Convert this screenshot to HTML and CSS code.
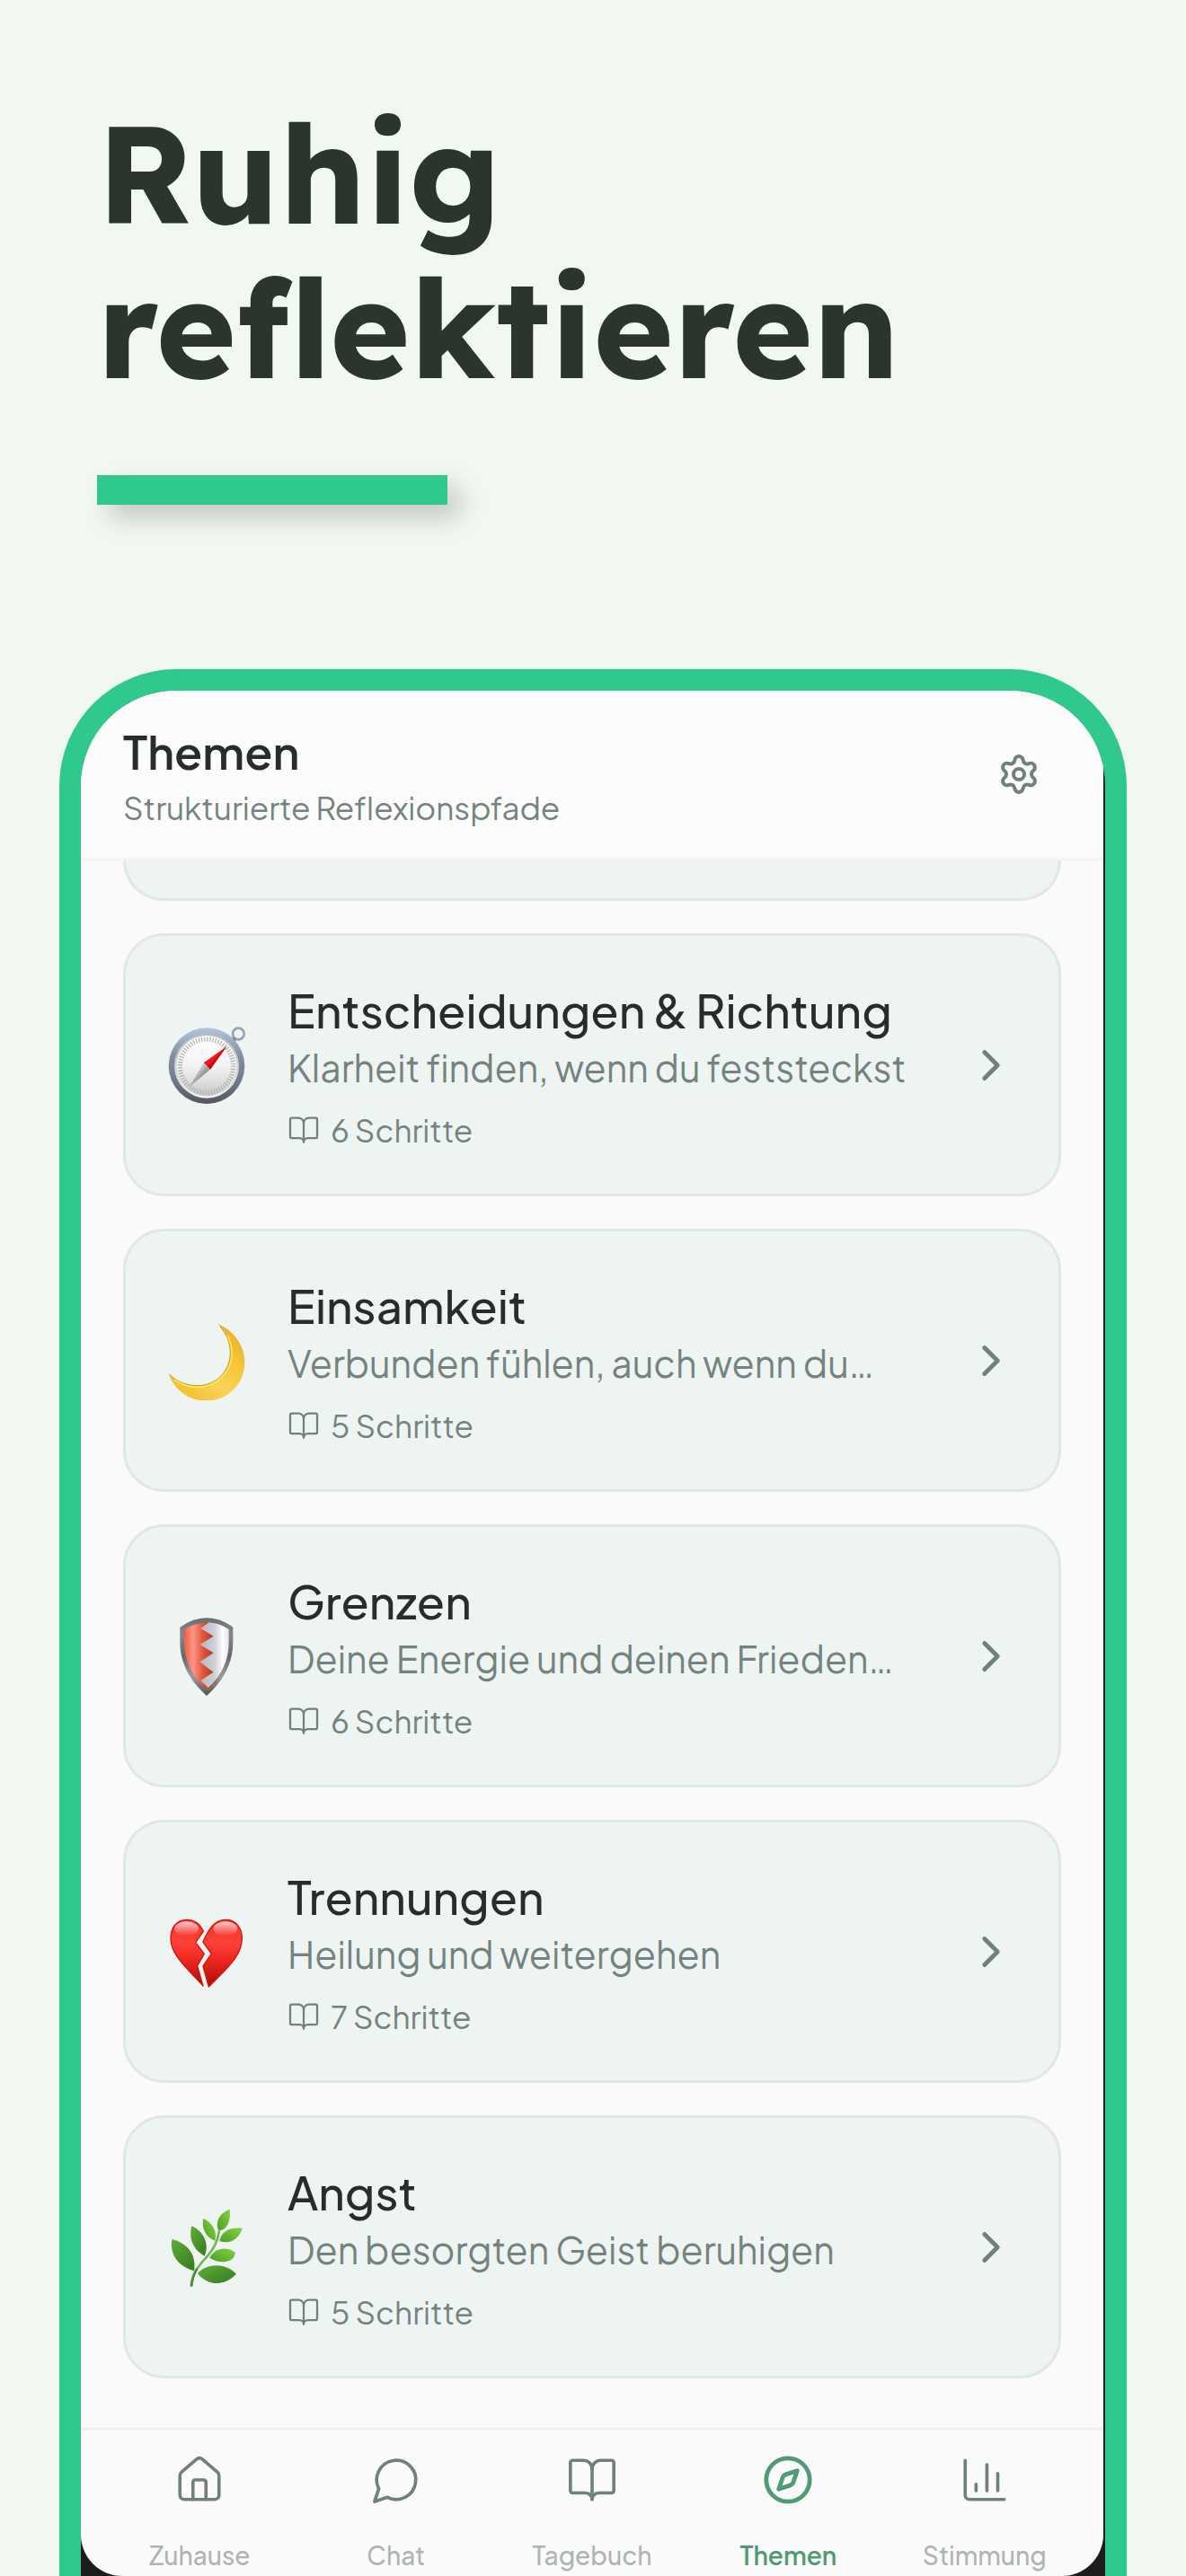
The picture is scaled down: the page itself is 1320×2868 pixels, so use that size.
FILE: index.html
```html
<!DOCTYPE html>
<html lang="de">
<head>
<meta charset="utf-8">
<meta name="viewport" content="width=device-width, initial-scale=1">
<title>Ruhig reflektieren</title>
<link rel="stylesheet" href="styles.css">
</head>
<body>
<svg width="0" height="0" class="defs" aria-hidden="true">
  <defs>
    <symbol id="book" viewBox="0 0 24 24"><path d="M12 7v14"/><path d="M3 18a1 1 0 0 1-1-1V4a1 1 0 0 1 1-1h5a4 4 0 0 1 4 4 4 4 0 0 1 4-4h5a1 1 0 0 1 1 1v13a1 1 0 0 1-1 1h-6a3 3 0 0 0-3 3 3 3 0 0 0-3-3z"/></symbol>
    <symbol id="chevron" viewBox="0 0 24 24"><path d="m9 18 6-6-6-6"/></symbol>
  </defs>
</svg>

<header class="hero">
  <h1 class="hero-title">Ruhig<br>reflektieren</h1>
  <div class="hero-bar"></div>
</header>

<main class="phone">
  <div class="screen">
    <header class="topbar">
      <div>
        <h2 class="topbar-title">Themen</h2>
        <p class="topbar-sub">Strukturierte Reflexionspfade</p>
      </div>
      <button class="settings" type="button" aria-label="Einstellungen">
        <svg class="icon icon-gear" viewBox="0 0 24 24"><path d="M9.671 4.136a2.34 2.34 0 0 1 4.659 0 2.34 2.34 0 0 0 3.319 1.915 2.34 2.34 0 0 1 2.33 4.033 2.34 2.34 0 0 0 0 3.831 2.34 2.34 0 0 1-2.33 4.033 2.34 2.34 0 0 0-3.319 1.915 2.34 2.34 0 0 1-4.659 0 2.34 2.34 0 0 0-3.32-1.915 2.34 2.34 0 0 1-2.33-4.033 2.34 2.34 0 0 0 0-3.831A2.34 2.34 0 0 1 6.35 6.051a2.34 2.34 0 0 0 3.319-1.915"/><circle cx="12" cy="12" r="3"/></svg>
      </button>
    </header>

    <div class="list">
      <div class="card-tail"></div>

      <a class="card" href="#entscheidungen">
        <svg class="emoji" viewBox="48 61 264 264">
          <defs>
            <linearGradient id="bezel" x1="0" y1="0" x2="0" y2="1"><stop offset="0" stop-color="#b3c6dc"/><stop offset=".35" stop-color="#8592a4"/><stop offset=".7" stop-color="#70798a"/><stop offset="1" stop-color="#55545c"/></linearGradient>
            <linearGradient id="rim" x1="0" y1="0" x2="0" y2="1"><stop offset="0" stop-color="#b9bbbd"/><stop offset=".6" stop-color="#d4d5d6"/><stop offset="1" stop-color="#f4f4f4"/></linearGradient>
            <linearGradient id="face" x1="0" y1="0" x2="0" y2="1"><stop offset="0" stop-color="#ffffff"/><stop offset=".5" stop-color="#f3f3f3"/><stop offset="1" stop-color="#c9c9c9"/></linearGradient>
            <linearGradient id="silver" x1="0" y1="0" x2="1" y2="1"><stop offset=".3" stop-color="#e2e2e2"/><stop offset=".55" stop-color="#9a9a9a"/></linearGradient>
          </defs>
          <circle cx="286" cy="88" r="19" fill="none" stroke="#9aa3b4" stroke-width="8"/>
          <path d="M260 104l12-4 6 10-6 12z" fill="#6f7b8b"/>
          <circle cx="180" cy="195" r="127" fill="url(#bezel)"/>
          <circle cx="180" cy="195" r="108" fill="url(#rim)"/>
          <circle cx="180" cy="195" r="101" fill="url(#face)"/>
          <circle cx="180" cy="195" r="89" fill="none" stroke="#b4b4b4" stroke-width="16" stroke-dasharray="4 5.32"/>
          <path d="M247 130L170 185l12 12 10 10z" fill="#f3141c"/>
          <path d="M247 130L182 197l10 10z" fill="#c80d16"/>
          <path d="M170 185l22 22-70 58z" fill="url(#silver)"/>
        </svg>
        <div class="card-body">
          <h3 class="card-title">Entscheidungen &amp; Richtung</h3>
          <p class="card-text">Klarheit finden, wenn du feststeckst</p>
          <p class="card-meta"><svg class="icon icon-book"><use href="#book"/></svg>6 Schritte</p>
        </div>
        <svg class="icon icon-chevron"><use href="#chevron"/></svg>
      </a>

      <a class="card" href="#einsamkeit">
        <svg class="emoji" viewBox="48 88 264 264">
          <defs>
            <linearGradient id="moon" x1="1" y1="0" x2=".2" y2="1"><stop offset="0" stop-color="#e0a92c"/><stop offset=".35" stop-color="#f6c335"/><stop offset=".65" stop-color="#f8d45a"/><stop offset="1" stop-color="#f2bd2a"/></linearGradient>
          </defs>
          <path d="M216 97C270 116 307 168 307 226 307 297 250 354 179 354 121 354 71 318 52 261 78 290 112 304 150 304 212 304 260 254 260 194 260 158 245 122 216 97Z" fill="url(#moon)"/>
          <path d="M56 266C82 291 114 303 150 303 212 303 259 254 259 194 259 162 247 130 225 106" fill="none" stroke="#c98f1e" stroke-width="3"/>
          <path d="M74 284C100 302 124 308 150 308 214 308 264 256 264 196 264 174 258 150 248 134" fill="none" stroke="#ffe84e" stroke-width="5"/>
        </svg>
        <div class="card-body">
          <h3 class="card-title">Einsamkeit</h3>
          <p class="card-text">Verbunden fühlen, auch wenn du…</p>
          <p class="card-meta"><svg class="icon icon-book"><use href="#book"/></svg>5 Schritte</p>
        </div>
        <svg class="icon icon-chevron"><use href="#chevron"/></svg>
      </a>

      <a class="card" href="#grenzen">
        <svg class="emoji" viewBox="48 85 264 264">
          <defs>
            <linearGradient id="steel" x1="0" y1="0" x2="0" y2="1"><stop offset="0" stop-color="#6a6d6e"/><stop offset=".2" stop-color="#85898a"/><stop offset=".5" stop-color="#64696a"/><stop offset=".75" stop-color="#9a9d9e"/><stop offset="1" stop-color="#4e5152"/></linearGradient>
            <linearGradient id="red" x1="0" y1="0" x2="1" y2="0"><stop offset="0" stop-color="#ee5f48"/><stop offset=".2" stop-color="#fb9685"/><stop offset=".42" stop-color="#e4543a"/><stop offset=".6" stop-color="#b8422c"/><stop offset="1" stop-color="#b8422c"/></linearGradient>
            <linearGradient id="white" x1="0" y1="0" x2="1" y2="0"><stop offset="0" stop-color="#b4b8bc"/><stop offset=".5" stop-color="#cdd1d5"/><stop offset=".8" stop-color="#fdfdff"/><stop offset="1" stop-color="#e3e6e9"/></linearGradient>
          </defs>
          <path d="M91 120Q180 58 268 120V170C268 250 226 308 180 349 134 308 91 250 91 170Z" fill="url(#steel)"/>
          <path d="M105 127Q140 106 188 104L254 127V170C254 240 220 294 184 330 140 296 105 240 105 170Z" fill="url(#red)"/>
          <path d="M188 104Q226 108 254 127V170C254 240 222 290 186 322L160 298 203 270 157 236 203 206 157 178 203 150 160 124Z" fill="url(#white)"/>
        </svg>
        <div class="card-body">
          <h3 class="card-title">Grenzen</h3>
          <p class="card-text">Deine Energie und deinen Frieden…</p>
          <p class="card-meta"><svg class="icon icon-book"><use href="#book"/></svg>6 Schritte</p>
        </div>
        <svg class="icon icon-chevron"><use href="#chevron"/></svg>
      </a>

      <a class="card" href="#trennungen">
        <svg class="emoji" viewBox="48 82 264 264">
          <defs>
            <linearGradient id="heart" gradientUnits="userSpaceOnUse" x1="0" y1="105" x2="0" y2="332"><stop offset="0" stop-color="#f0302a"/><stop offset=".35" stop-color="#fd4238"/><stop offset=".6" stop-color="#f0271e"/><stop offset="1" stop-color="#a50d08"/></linearGradient>
            <linearGradient id="gloss" x1="0" y1="0" x2="0" y2="1"><stop offset="0" stop-color="#fff" stop-opacity=".75"/><stop offset="1" stop-color="#fff" stop-opacity="0"/></linearGradient>
          </defs>
          <path d="M169 146C158 120 138 107 113 107 80 107 60 134 60 168 60 226 116 270 168 328L149 261 172 221 143 183Z" fill="url(#heart)" stroke="#d4120e" stroke-width="4" stroke-linejoin="round"/>
          <path d="M187 331C246 270 298 230 298 168 298 133 276 107 243 107 206 107 186 140 168 181L196 221 168 262Z" fill="url(#heart)" stroke="#d4120e" stroke-width="4" stroke-linejoin="round"/>
          <ellipse cx="113" cy="137" rx="40" ry="24" fill="url(#gloss)"/>
          <ellipse cx="243" cy="137" rx="40" ry="24" fill="url(#gloss)"/>
        </svg>
        <div class="card-body">
          <h3 class="card-title">Trennungen</h3>
          <p class="card-text">Heilung und weitergehen</p>
          <p class="card-meta"><svg class="icon icon-book"><use href="#book"/></svg>7 Schritte</p>
        </div>
        <svg class="icon icon-chevron"><use href="#chevron"/></svg>
      </a>

      <a class="card" href="#angst">
        <svg class="emoji" viewBox="48 79 264 264">
          <defs>
            <linearGradient id="leafdark" x1="0" y1="0" x2="1" y2="1"><stop offset="0" stop-color="#5fae35"/><stop offset="1" stop-color="#357a22"/></linearGradient>
            <linearGradient id="leaflight" x1="1" y1="0" x2="0" y2="1"><stop offset="0" stop-color="#86d13f"/><stop offset="1" stop-color="#4b9f25"/></linearGradient>
          </defs>
          <path d="M129 342C132 300 150 276 178 246 205 216 216 192 222 156" fill="none" stroke="#76b653" stroke-width="8"/>
          <path d="M129 342C130 318 137 300 148 282" fill="none" stroke="#4c8a3c" stroke-width="8"/>
          <path d="M257 84C225 96 206 124 220 156 248 154 262 124 257 84Z" fill="url(#leaflight)"/>
          <path d="M169 115C162 146 176 178 208 189 216 158 200 130 169 115Z" fill="url(#leaflight)"/>
          <path d="M299 148C262 142 230 156 223 190 258 202 288 184 299 148Z" fill="url(#leaflight)"/>
          <path d="M130 140C118 184 138 222 173 240 190 200 170 158 130 140Z" fill="url(#leafdark)"/>
          <path d="M190 246C206 214 246 206 275 228 274 262 226 270 190 246Z" fill="url(#leaflight)"/>
          <path d="M64 184C56 236 84 274 138 290 146 236 118 198 64 184Z" fill="url(#leafdark)"/>
          <path d="M150 298C184 262 244 264 279 300 238 342 184 342 150 298Z" fill="url(#leafdark)"/>
        </svg>
        <div class="card-body">
          <h3 class="card-title">Angst</h3>
          <p class="card-text">Den besorgten Geist beruhigen</p>
          <p class="card-meta"><svg class="icon icon-book"><use href="#book"/></svg>5 Schritte</p>
        </div>
        <svg class="icon icon-chevron"><use href="#chevron"/></svg>
      </a>
    </div>

    <nav class="tabs">
      <a class="tab" href="#zuhause">
        <svg class="icon icon-tab" viewBox="0 0 24 24"><path d="M15 21v-8a1 1 0 0 0-1-1h-4a1 1 0 0 0-1 1v8"/><path d="M3 10a2 2 0 0 1 .709-1.528l7-6a2 2 0 0 1 2.582 0l7 6A2 2 0 0 1 21 10v9a2 2 0 0 1-2 2H5a2 2 0 0 1-2-2z"/></svg>
        <span class="tab-label">Zuhause</span>
      </a>
      <a class="tab" href="#chat">
        <svg class="icon icon-tab" viewBox="0 0 24 24"><path d="M7.9 20A9 9 0 1 0 4 16.1L2 22Z"/></svg>
        <span class="tab-label">Chat</span>
      </a>
      <a class="tab" href="#tagebuch">
        <svg class="icon icon-tab"><use href="#book"/></svg>
        <span class="tab-label">Tagebuch</span>
      </a>
      <a class="tab tab-active" href="#themen" aria-current="page">
        <svg class="icon icon-tab" viewBox="0 0 24 24"><circle cx="12" cy="12" r="10"/><path d="m16.24 7.76-1.804 5.411a2 2 0 0 1-1.265 1.265L7.76 16.24l1.804-5.411a2 2 0 0 1 1.265-1.265z"/></svg>
        <span class="tab-label">Themen</span>
      </a>
      <a class="tab" href="#stimmung">
        <svg class="icon icon-tab" viewBox="0 0 24 24"><path d="M3 3v16a2 2 0 0 0 2 2h16"/><path d="M18 17V9"/><path d="M13 17V5"/><path d="M8 17v-3"/></svg>
        <span class="tab-label">Stimmung</span>
      </a>
    </nav>
  </div>
</main>
</body>
</html>
```
FILE: styles.css
```css
* {
  box-sizing: border-box;
}

body {
  margin: 0;
  background: #f1f8f2;
  font-family: "Plus Jakarta Sans", Inter, sans-serif;
  font-variant-ligatures: none;
  color: #262d2b;
}

h1, h2, h3, p {
  margin: 0;
}

a {
  color: inherit;
  text-decoration: none;
}

.defs {
  position: absolute;
}

.hero {
  padding: 106px 108px 0;
}

.hero-title {
  font-family: Lexend, Inter, sans-serif;
  font-size: 152px;
  font-weight: 700;
  line-height: 172px;
  color: #2c352b;
}

.hero-bar {
  width: 390px;
  height: 33px;
  margin-top: 79px;
  background: #2fc98d;
  box-shadow: 14px 14px 28px rgba(0, 0, 0, 0.2);
}

.phone {
  margin: 183px 66px 0;
  padding-right: 2px;
  border: 24px solid #2fc98d;
  border-bottom: 0;
  border-radius: 130px 130px 0 0;
  background: #1c1c1c;
  overflow: hidden;
}

.screen {
  border-radius: 0 0 46px 46px;
  background: #fafafa;
  overflow: hidden;
}

.icon {
  display: block;
  flex: none;
  fill: none;
  stroke: #70807a;
  stroke-width: 2;
  stroke-linecap: round;
  stroke-linejoin: round;
}

.topbar {
  display: flex;
  align-items: center;
  justify-content: space-between;
  padding: 33px 70px 33px 47px;
  border-bottom: 3px solid #f4f5f5;
  background: #fcfcfc;
}

.topbar-title {
  font-size: 51px;
  font-weight: 600;
  line-height: 68px;
}

.topbar-sub {
  margin-top: 6px;
  font-size: 35px;
  line-height: 46px;
  color: #74837e;
}

.settings {
  padding: 0;
  border: 0;
  background: none;
}

.icon-gear {
  width: 48px;
  height: 48px;
}

.list {
  display: flex;
  flex-direction: column;
  gap: 36px;
  padding: 0 47px 55px;
}

.card-tail {
  height: 45px;
  border: 3px solid #e1e7e5;
  border-top: 0;
  border-radius: 0 0 46px 46px;
  background: #eef4f2;
}

.card {
  display: flex;
  align-items: center;
  padding: 48px 46px;
  border: 3px solid #e1e7e5;
  border-radius: 46px;
  background: #eef4f2;
}

.emoji {
  flex: none;
  width: 88px;
  height: 88px;
  margin-right: 46px;
}

.card-body {
  flex: 1;
  min-width: 0;
}

.card-title {
  font-size: 51px;
  font-weight: 500;
  line-height: 68px;
  white-space: nowrap;
}

.card-text {
  margin-top: 3px;
  font-size: 41px;
  line-height: 54px;
  color: #74837e;
  white-space: nowrap;
}

.card-meta {
  display: flex;
  align-items: center;
  gap: 12px;
  margin-top: 20px;
  font-size: 35px;
  line-height: 46px;
  color: #74837e;
}

.icon-book {
  width: 36px;
  height: 36px;
  stroke-width: 1.5;
}

.icon-chevron {
  width: 58px;
  height: 58px;
}

.tabs {
  display: grid;
  grid-template-columns: repeat(5, 1fr);
  padding: 26px 23px 4px;
  border-top: 3px solid #eeefef;
}

.tab {
  display: flex;
  flex-direction: column;
  align-items: center;
  gap: 36px;
  color: #adb6b3;
}

.icon-tab {
  width: 58px;
  height: 58px;
  stroke-width: 1.5;
}

.tab-label {
  font-size: 28px;
  font-weight: 500;
  line-height: 38px;
}

.tab-active {
  color: #519a76;
}

.tab-active .icon {
  stroke: #519a76;
  stroke-width: 2;
}

.tab-active .tab-label {
  font-weight: 600;
}
```
